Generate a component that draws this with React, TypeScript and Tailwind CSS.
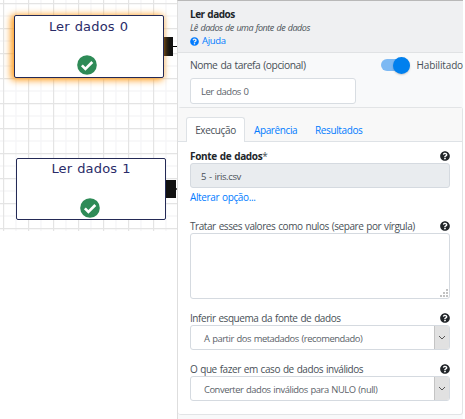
import React from "react";

function CheckBadge() {
  return (
    <svg viewBox="0 0 20 20" className="h-5 w-5">
      <circle cx="10" cy="10" r="9.8" fill="#2e8b57" />
      <path d="M4.9 10.4l3.5 3.5 6.9-6.9" fill="none" stroke="#fff" strokeWidth="2.7" />
    </svg>
  );
}

function HelpIcon({ className }: { className: string }) {
  return (
    <svg viewBox="0 0 512 512" className={className} fill="currentColor">
      <path d="M504 256c0 136.997-111.043 248-248 248S8 392.997 8 256C8 119.083 119.043 8 256 8s248 111.083 248 248zM262.655 90c-54.497 0-89.255 22.957-116.549 63.758-3.536 5.286-2.353 12.415 2.715 16.258l34.699 26.31c5.205 3.947 12.621 3.008 16.665-2.122 17.864-22.658 30.113-35.797 57.303-35.797 20.429 0 45.698 13.148 45.698 32.958 0 14.976-12.363 22.667-32.534 33.976C247.128 238.528 216 254.941 216 296v4c0 6.627 5.373 12 12 12h56c6.627 0 12-5.373 12-12v-1.333c0-28.462 83.186-29.647 83.186-106.667 0-58.002-60.165-102-116.531-102zM256 338c-25.365 0-46 20.635-46 46 0 25.364 20.635 46 46 46s46-20.636 46-46c0-25.365-20.635-46-46-46z" />
    </svg>
  );
}

function Label({ children }: { children: React.ReactNode }) {
  return (
    <div className="flex h-[15px] items-center justify-between whitespace-nowrap">
      <span className="pt-[2px]">{children}</span>
      <HelpIcon className="h-[10px] w-[10px] shrink-0 text-[#212529]" />
    </div>
  );
}

function Select({ value }: { value: string }) {
  return (
    <div className="flex h-[25px] w-[260px] overflow-hidden rounded-[3px] border border-[#d5dae0] bg-white">
      <span className="flex-1 whitespace-nowrap pl-[13px] text-[9.4px] leading-[25px] tracking-[-0.46px] text-[#5c636a]">{value}</span>
      <span className="flex w-[15px] items-center justify-center border-l border-[#c4c4c4] bg-[#e1e1e1]">
        <svg viewBox="0 0 8 6" className="h-[6px] w-2" fill="none" stroke="#555" strokeWidth="1">
          <path d="M1 1l3 3 3-3" />
        </svg>
      </span>
    </div>
  );
}

function Canvas() {
  return (
    <div className="relative h-[231px] w-[177px] shrink-0 overflow-hidden">
      <svg className="h-[231px] w-[177px]">
        <defs>
          <pattern id="grid" width="25" height="25" x="3" y="3" patternUnits="userSpaceOnUse">
            <path d="M13 0v25M0 13h25" stroke="#f6f6f8" strokeWidth="1.4" fill="none" />
            <path d="M.6 0v25M0 .6h25" stroke="#e4e4e4" strokeWidth="1.2" fill="none" />
          </pattern>
        </defs>
        <rect width="177" height="231" fill="url(#grid)" />
      </svg>
      <div className="absolute left-[163px] top-[37px] h-[19px] w-[10px] bg-[#111]" />
      <div className="absolute left-[173px] top-[46px] h-px w-1 bg-black" />
      <div className="absolute left-[165px] top-[180px] h-[18px] w-[11px] bg-[#111]" />
      <div className="absolute left-[176px] top-[188px] h-[2px] w-px bg-[#555]" />
      <div className="absolute left-[14px] top-[15px] flex h-[63px] w-[150px] flex-col items-center justify-between rounded-[2px] border border-[#242a56] bg-white pb-[2px] shadow-[-2px_1px_7px_1px_#ff9a16]">
        <span className="-ml-px font-['DejaVu_Sans',sans-serif] text-[13px] leading-[22px] tracking-[0.15px] text-[#2a2b68]">Ler dados 0</span>
        <div className="-ml-1"><CheckBadge /></div>
      </div>
      <div className="absolute left-[16px] top-[158px] flex h-[62px] w-[150px] flex-col items-center justify-between rounded-[2px] border border-[#242a56] bg-white pb-[1px]">
        <span className="font-['DejaVu_Sans',sans-serif] text-[13px] leading-[20px] tracking-[0.15px] text-[#2a2b68]">Ler dados 1</span>
        <div className="-ml-[3px]"><CheckBadge /></div>
      </div>
    </div>
  );
}

export default function App() {
  return (
    <div className="flex h-[419px] w-[465px] overflow-hidden bg-white font-['Open_Sans','Noto_Sans',sans-serif] text-[10px] tracking-[-0.44px] text-[#495057] [word-spacing:0.75px]">
      <Canvas />
      <main className="flex h-[419px] w-[286px] flex-col border-l border-t border-l-[#dedede] border-t-[#b8b8b8] bg-[#f8f9fa]">
        <header className="h-[52px] border-b border-[#e0e2e4] bg-[#eff0f2] pl-3 pt-[5px]">
          <div className="h-[15px] font-bold leading-[16px] tracking-[-0.52px] text-[#212529]">Ler dados</div>
          <div className="h-[13px] text-[9px] italic leading-[13px] tracking-[-0.48px]">Lê dados de uma fonte de dados</div>
          <div className="flex h-[15px] items-center gap-[3px] text-[9.5px] tracking-[-0.34px] text-[#007bff]">
            <HelpIcon className="h-[9px] w-[9px]" />
            <span>Ajuda</span>
          </div>
        </header>
        <section className="h-[54px] pl-3 pt-1">
          <div className="flex h-[16px] items-center justify-between">
            <span className="pt-px text-[10.3px] tracking-[-0.46px]">Nome da tarefa (opcional)</span>
            <div className="flex items-center gap-[7px] whitespace-nowrap tracking-[-0.15px]">
              <div className="flex h-3 w-[29px] items-center justify-end rounded-full bg-[#7db9f3]">
                <span className="h-[17px] w-[17px] shrink-0 rounded-full bg-[#0080ee] shadow-[0_1px_2px_#0003]" />
              </div>
              <span>Habilitado</span>
            </div>
          </div>
          <div className="mt-[5px] h-[26px] w-[166px] rounded-[3px] border border-[#d8dde2] bg-white pl-[10px] text-[9.5px] leading-[25px] tracking-[-0.52px] text-[#5c636a]">Ler dados 0</div>
        </section>
        <section className="h-[308px] w-[285px] rounded-[3px] border border-l-0 border-[#e2e4e6] bg-white">
          <nav className="flex h-[34px] items-end border-b border-[#dee2e6] bg-[#f8f8f8] pl-[8px] tracking-[-0.38px] text-[#007bff]">
            <span className="-mb-px h-[25px] w-[59px] rounded-t-[3px] border border-b-0 border-[#dee2e6] bg-white text-center leading-[24px] text-[#495057]">Execução</span>
            <span className="h-[24px] w-[70px] pl-[9px] leading-[26px]">Aparência</span>
            <span className="h-[24px] leading-[26px]">Resultados</span>
          </nav>
          <div className="flex w-[272px] flex-col pl-3 pt-[6px]">
            <Label><b className="tracking-[-0.36px] text-[#212529]">Fonte de dados</b>*</Label>
            <div className="h-[25px] w-[260px] rounded-[3px] border border-[#d5dae0] bg-[#e9ecef] pl-[10px] text-[9.5px] leading-[25px] tracking-[-0.38px]">5 - iris.csv</div>
            <div className="mt-px h-[15px] leading-[16px] tracking-[-0.38px] text-[#007bff]">Alterar opção...</div>
            <div className="mt-[14px]"><Label>Tratar esses valores como nulos (separe por vírgula)</Label></div>
            <div className="flex h-[66px] w-[260px] items-end justify-end rounded-[3px] border border-[#d5dae0] bg-white p-px">
              <svg viewBox="0 0 8 8" className="h-2 w-2" fill="#c2c2c2">
                <path d="M0 6h2v2H0zM3 6h2v2H3zM6 6h2v2H6zM3 3h2v2H3zM6 3h2v2H6zM6 0h2v2H6z" />
              </svg>
            </div>
            <div className="mt-[11px]"><Label>Inferir esquema da fonte de dados</Label></div>
            <Select value="A partir dos metadados (recomendado)" />
            <div className="mt-[11px]"><Label>O que fazer em caso de dados inválidos</Label></div>
            <Select value="Converter dados inválidos para NULO (null)" />
          </div>
        </section>
      </main>
    </div>
  );
}
